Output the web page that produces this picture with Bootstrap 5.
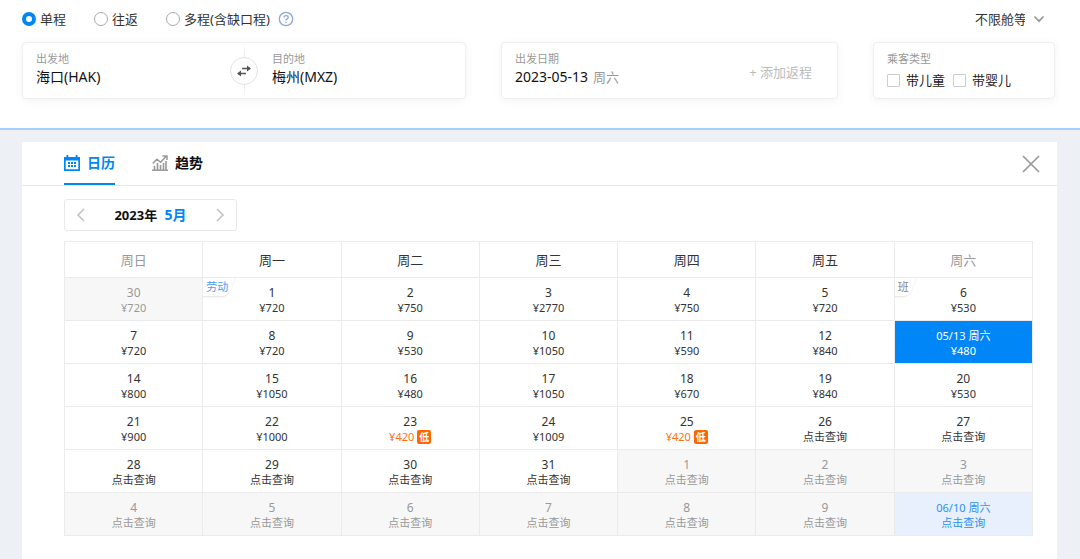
<!DOCTYPE html>
<html lang="zh-CN">
<head>
<meta charset="utf-8">
<meta name="viewport" content="width=device-width, initial-scale=1">
<title>机票低价日历</title>
<link href="https://cdn.jsdelivr.net/npm/bootstrap@5.3.0/dist/css/bootstrap.min.css" rel="stylesheet">
<style>
:root { --brand: #0086f6; --line: #ebebeb; }
body { font-family: "Noto Sans", "Noto Sans CJK SC", sans-serif; font-size: 13px; line-height: 20px; color: #333; background: #edf0f5; }
.search-area { padding: 9px 25px 29px 22px; border-bottom: 2px solid #a6cfff; }
.trip-types { gap: 28px; }
.trip-types .form-check-input { width: 14px; height: 14px; border: 1px solid #aaa; }
.trip-types .form-check-input:checked { border: 4px solid var(--brand); background: #fff; }
.form-check-input { box-shadow: none; }
.cabin { width: 70px; padding: 0 20px 0 0; font-size: 13px; line-height: 20px; margin-right: 10px; color: #333; background-position: right center; background-size: 12px 12px;
  background-image: url("data:image/svg+xml,%3csvg xmlns='http://www.w3.org/2000/svg' viewBox='0 0 12 12'%3e%3cpath d='M1.5 3.5 6 8.2l4.500-4.700' fill='none' stroke='%23999' stroke-width='1.700'/%3e%3c/svg%3e"); }
.search-grid { display: grid; grid-template-columns: 444fr 337fr 182fr; gap: 35px; margin-top: 13px; }
.search-card { border: 1px solid #eee; border-radius: 4px; box-shadow: 0 2px 10px rgba(0,0,0,.05); padding: 8px 13px 11px; min-width: 0; }
.caption-text { font-size: 11px; line-height: 16px; color: #999; }
.value-field { font-size: 14px; line-height: 20px; color: #111; border-radius: 0; }
.date-field { width: 78px; }
.city-to { padding-left: 28px; }
.weekday-text { color: #999; }
.divider-line { width: 1px; background: linear-gradient(#fff, #ddd 35%, #ddd 65%, #fff); }
.swap-btn { width: 28px; height: 28px; border: 1px solid #e2e2e2; color: #555; }
.add-return { font-size: 13px; line-height: 20px; color: #bbb; margin-right: 12px; margin-top: 6px; }
.search-card.passenger { padding-bottom: 8px; }
.passenger-row { margin-top: 3px; }
.passenger .form-check-input { width: 13px; height: 13px; border: 1px solid #ccc; border-radius: 1px; margin: 0 6px 0 0; }
.passenger label { color: #222; margin-right: 8px; }
.calendar-panel { margin: 12px 23px 0 22px; min-height: calc(100vh - 142px); }
.panel-head { border-bottom: 1px solid #e8e8e8; padding: 0 17px 0 42px; height: 44px; }
.panel-tabs { gap: 37px; }
.panel-tab { font-size: 14px; font-weight: 700; color: #111; height: 43px; gap: 7px; border-bottom: 2px solid transparent; }
.panel-tab.active { color: var(--brand); border-color: var(--brand); }
.panel-body { padding: 13px 24px 24px 42px; }
.month-nav { width: 173px; height: 32px; border: 1px solid #e8e8e8; border-radius: 3px; padding: 0 10px; margin-bottom: 10px; font-weight: 700; color: #111; }
.month-now { color: var(--brand); font-size: 14px; }
.fare-table { table-layout: fixed; margin: 0; color: #333; text-align: center; --bs-table-bg: transparent; }
.fare-table > :not(caption) > * > * { padding: 0; border: 1px solid var(--line); }
.fare-table th { height: 36px; font-weight: 400; color: #333; vertical-align: middle; }
.fare-table th.weekend, .fare-table td.muted button { color: #999; }
.fare-table td { height: 43px; position: relative; }
.fare-table td.muted { background: #f7f7f7; }
.fare-table td button { display: block; width: 100%; height: 42px; border: 0; padding: 0 0 2px; background: none; color: #333; font-size: 11px; line-height: 14px; }
.fare-table td b { display: block; font-weight: 400; font-size: 12px; line-height: 16px; margin-top: 4px; }
.fare-table td.chosen { background: var(--brand); }
.fare-table td.chosen button { color: #fff; }
.fare-table td.hovered { background: #e7f0fc; }
.fare-table td.hovered button { color: #2c90f7; }
.fare-table td.chosen b, .fare-table td.hovered b { font-size: 11px; }
.fare-table td.lowest button { color: #ff6f0f; }
.fare-table td.lowest b { color: #333; }
.low-tag { display: inline-block; width: 14px; height: 14px; line-height: 14px; font-size: 10px; font-weight: 700; color: #fff; background: #ff6600; border-radius: 2px; margin-left: 3px; vertical-align: top; }
.day-tag { position: absolute; left: 0; top: 0; padding: 0 8px 0 3px; font-size: 11px; line-height: 18px; color: #888; overflow: hidden; height: 22px; pointer-events: none; }
.day-tag::before { content: ""; position: absolute; z-index: -1; left: -12px; right: 4px; top: -2px; height: 20px; transform: skewX(-20deg); background: #fff; border-radius: 0 0 6px 0; box-shadow: 0 1px 2px rgba(0,0,0,.12); }
.day-tag.holiday { color: #4c9bfb; }
</style>
</head>
<body>
<form class="search-area bg-white">
  <div class="d-flex align-items-center justify-content-between">
    <div class="trip-types d-flex align-items-center">
      <div class="d-flex align-items-center"><input class="form-check-input m-0 me-1" type="radio" name="trip" id="oneway" checked><label for="oneway">单程</label></div>
      <div class="d-flex align-items-center"><input class="form-check-input m-0 me-1" type="radio" name="trip" id="round"><label for="round">往返</label></div>
      <div class="d-flex align-items-center"><input class="form-check-input m-0 me-1" type="radio" name="trip" id="multi"><label for="multi">多程(含缺口程)</label>
        <button type="button" class="btn p-0 border-0 d-flex ms-2" aria-label="帮助"><svg width="16" height="16" viewBox="0 0 16 16" fill="none" stroke="#8aa6d6" stroke-width="1.300"><circle cx="8" cy="8" r="6.700"/><path d="M5.900 6.500C5.900 4 10.200 4 10.200 6.400c0 1.500-2.200 1.500-2.200 3.100"/><path d="M8 10.700v1.400"/></svg></button>
      </div>
    </div>
    <select class="form-select cabin border-0" aria-label="舱等"><option>不限舱等</option></select>
  </div>
  <div class="search-grid">
    <div class="search-card position-relative d-flex">
      <div class="w-50">
        <label class="caption-text d-block" for="from">出发地</label>
        <input class="value-field form-control border-0 p-0" id="from" value="海口(HAK)">
      </div>
      <div class="divider-line position-absolute top-0 bottom-0 start-50"></div>
      <button type="button" class="swap-btn btn rounded-circle bg-white p-0 position-absolute top-50 start-50 translate-middle d-flex align-items-center justify-content-center" aria-label="交换城市">
        <svg width="16" height="14" viewBox="0 0 16 14" fill="none" stroke="currentColor" stroke-width="1.500"><path d="M6 4.500h8M2 9.500h8"/><path d="m11 1.500 4 3-4 3zM5 6.500l-4 3 4 3z" fill="currentColor" stroke="none"/></svg>
      </button>
      <div class="city-to w-50">
        <label class="caption-text d-block" for="to">目的地</label>
        <input class="value-field form-control border-0 p-0" id="to" value="梅州(MXZ)">
      </div>
    </div>
    <div class="search-card d-flex align-items-center justify-content-between">
      <div>
        <label class="caption-text d-block" for="date">出发日期</label>
        <div class="d-flex"><input class="value-field date-field form-control border-0 p-0" id="date" value="2023-05-13"><span class="weekday-text">周六</span></div>
      </div>
      <button type="button" class="add-return btn border-0 p-0">+ 添加返程</button>
    </div>
    <div class="search-card passenger">
      <div class="caption-text">乘客类型</div>
      <div class="passenger-row d-flex align-items-center text-nowrap">
        <input class="form-check-input" type="checkbox" id="child"><label for="child">带儿童</label>
        <input class="form-check-input" type="checkbox" id="infant"><label for="infant">带婴儿</label>
      </div>
    </div>
  </div>
</form>

<main class="calendar-panel bg-white">
  <div class="panel-head d-flex justify-content-between">
    <div class="panel-tabs d-flex">
      <button type="button" class="panel-tab active btn rounded-0 border-top-0 border-start-0 border-end-0 p-0 d-flex align-items-center">
        <svg width="16" height="16" viewBox="0 0 16 16" fill="currentColor"><path fill-rule="evenodd" d="M2.500 0h1.800v2h7.400V0h1.800v2H16v14H0V2h2.500zM1.700 5.500v8.800h12.600V5.500z"/><path d="M4 7h2v2H4zM7 7h2v2H7zM10 7h2v2h-2zM4 10h2v2H4zM7 10h2v2H7zM10 10h2v2h-2z"/></svg>日历
      </button>
      <button type="button" class="panel-tab btn rounded-0 border-top-0 border-start-0 border-end-0 p-0 d-flex align-items-center">
        <svg width="16" height="16" viewBox="0 0 16 16" fill="none" stroke="#999"><path d="M0 15.200h16" stroke-width="1.500"/><path d="M2.500 15v-4M5.500 15V8M8.500 15v-5M11.500 15V8M14 15V6" stroke-width="1.600"/><path d="M.7 8.500 5 4.200l3.500 3L14 1.500M10.500 1H15v4" stroke-width="1.500"/></svg>趋势
      </button>
    </div>
    <button type="button" class="btn p-0 border-0 d-flex align-items-center" aria-label="关闭"><svg width="18" height="18" viewBox="0 0 18 18" stroke="#999" stroke-width="1.700"><path d="m1 1 16 16M17 1 1 17"/></svg></button>
  </div>
  <div class="panel-body">
    <div class="month-nav d-flex align-items-center justify-content-between">
      <button type="button" class="btn p-0 border-0 d-flex" aria-label="上个月"><svg width="12" height="14" viewBox="0 0 12 14" fill="none" stroke="#c4c4c4" stroke-width="1.600"><path d="M9 1 3 7l6 6"/></svg></button>
      <span>2023年 <span class="month-now ms-1">5月</span></span>
      <button type="button" class="btn p-0 border-0 d-flex" aria-label="下个月"><svg width="12" height="14" viewBox="0 0 12 14" fill="none" stroke="#c4c4c4" stroke-width="1.600"><path d="m3 1 6 6-6 6"/></svg></button>
    </div>
    <table class="table table-bordered fare-table">
      <thead><tr><th class="weekend">周日</th><th>周一</th><th>周二</th><th>周三</th><th>周四</th><th>周五</th><th class="weekend">周六</th></tr></thead>
      <tbody>
        <tr>
          <td class="muted"><button type="button"><b>30</b>¥720</button></td>
          <td><span class="day-tag holiday z-1">劳动</span><button type="button"><b>1</b>¥720</button></td>
          <td><button type="button"><b>2</b>¥750</button></td>
          <td><button type="button"><b>3</b>¥2770</button></td>
          <td><button type="button"><b>4</b>¥750</button></td>
          <td><button type="button"><b>5</b>¥720</button></td>
          <td><span class="day-tag z-1">班</span><button type="button"><b>6</b>¥530</button></td>
        </tr>
        <tr>
          <td><button type="button"><b>7</b>¥720</button></td>
          <td><button type="button"><b>8</b>¥720</button></td>
          <td><button type="button"><b>9</b>¥530</button></td>
          <td><button type="button"><b>10</b>¥1050</button></td>
          <td><button type="button"><b>11</b>¥590</button></td>
          <td><button type="button"><b>12</b>¥840</button></td>
          <td class="chosen"><button type="button"><b>05/13 周六</b>¥480</button></td>
        </tr>
        <tr>
          <td><button type="button"><b>14</b>¥800</button></td>
          <td><button type="button"><b>15</b>¥1050</button></td>
          <td><button type="button"><b>16</b>¥480</button></td>
          <td><button type="button"><b>17</b>¥1050</button></td>
          <td><button type="button"><b>18</b>¥670</button></td>
          <td><button type="button"><b>19</b>¥840</button></td>
          <td><button type="button"><b>20</b>¥530</button></td>
        </tr>
        <tr>
          <td><button type="button"><b>21</b>¥900</button></td>
          <td><button type="button"><b>22</b>¥1000</button></td>
          <td class="lowest"><button type="button"><b>23</b>¥420<span class="low-tag">低</span></button></td>
          <td><button type="button"><b>24</b>¥1009</button></td>
          <td class="lowest"><button type="button"><b>25</b>¥420<span class="low-tag">低</span></button></td>
          <td><button type="button"><b>26</b>点击查询</button></td>
          <td><button type="button"><b>27</b>点击查询</button></td>
        </tr>
        <tr>
          <td><button type="button"><b>28</b>点击查询</button></td>
          <td><button type="button"><b>29</b>点击查询</button></td>
          <td><button type="button"><b>30</b>点击查询</button></td>
          <td><button type="button"><b>31</b>点击查询</button></td>
          <td class="muted"><button type="button"><b>1</b>点击查询</button></td>
          <td class="muted"><button type="button"><b>2</b>点击查询</button></td>
          <td class="muted"><button type="button"><b>3</b>点击查询</button></td>
        </tr>
        <tr>
          <td class="muted"><button type="button"><b>4</b>点击查询</button></td>
          <td class="muted"><button type="button"><b>5</b>点击查询</button></td>
          <td class="muted"><button type="button"><b>6</b>点击查询</button></td>
          <td class="muted"><button type="button"><b>7</b>点击查询</button></td>
          <td class="muted"><button type="button"><b>8</b>点击查询</button></td>
          <td class="muted"><button type="button"><b>9</b>点击查询</button></td>
          <td class="hovered"><button type="button"><b>06/10 周六</b>点击查询</button></td>
        </tr>
      </tbody>
    </table>
  </div>
</main>
<script src="https://cdn.jsdelivr.net/npm/bootstrap@5.3.0/dist/js/bootstrap.bundle.min.js"></script>
</body>
</html>
